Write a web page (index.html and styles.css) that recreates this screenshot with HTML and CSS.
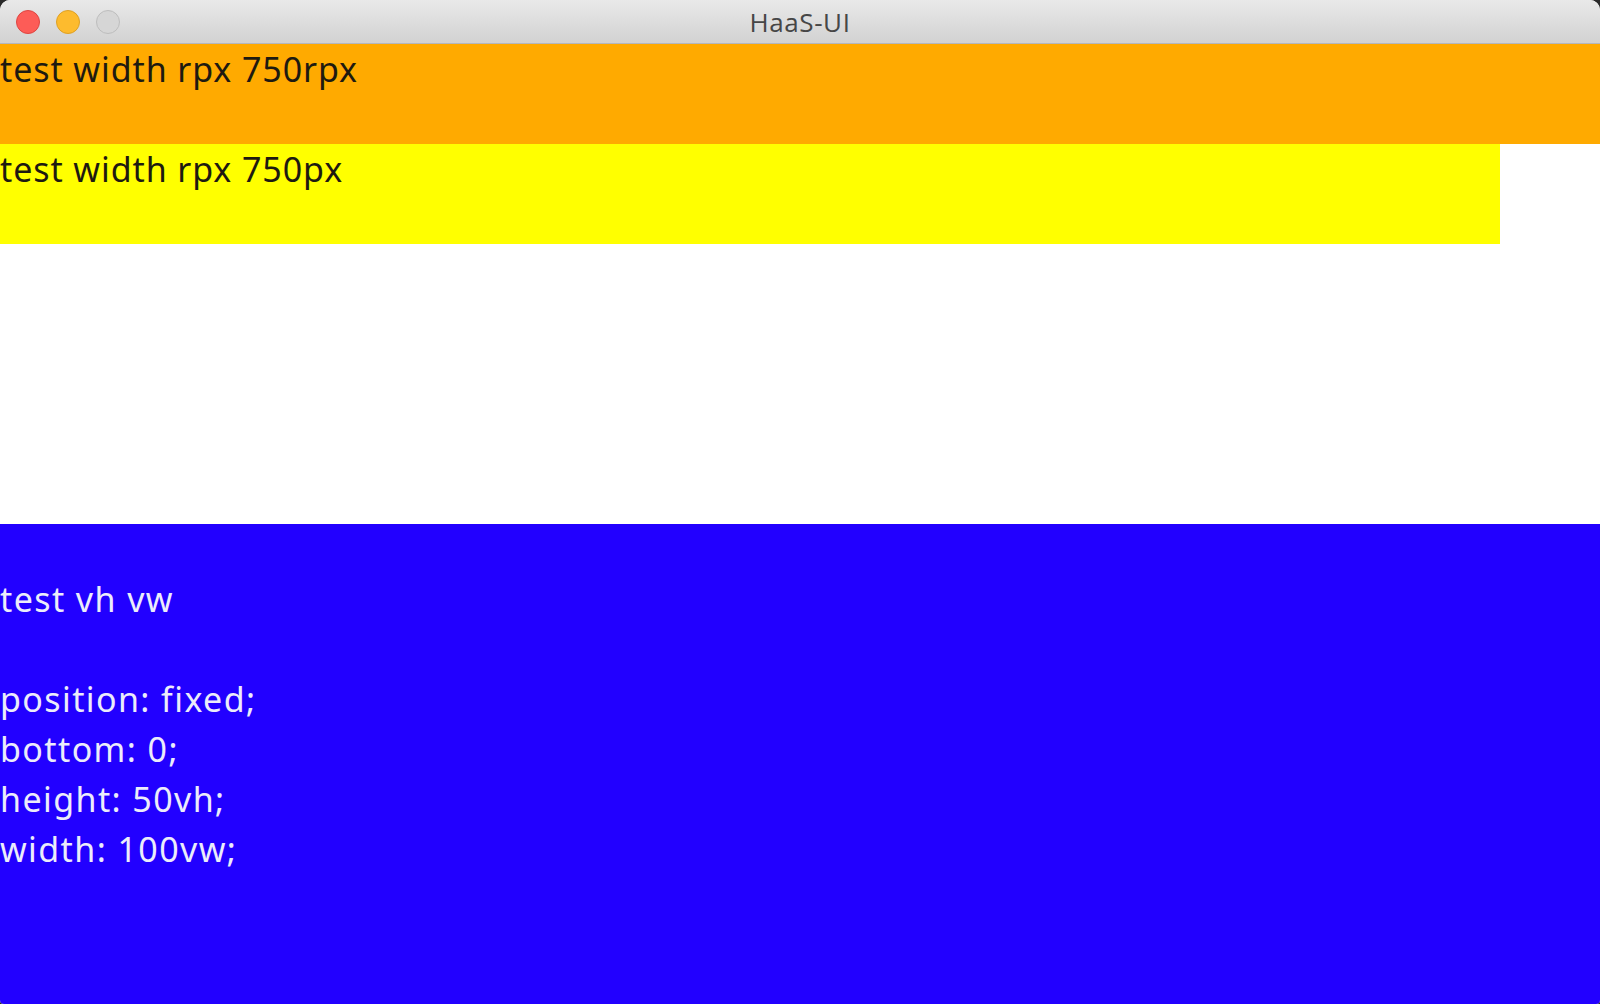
FILE: index.html
```html
<!DOCTYPE html>
<html>
<head>
<meta charset="utf-8">
<title>HaaS-UI</title>
<link rel="stylesheet" href="styles.css">
</head>
<body>
<div class="window">
  <header class="titlebar">
    <div class="lights">
      <span class="light red"></span>
      <span class="light yellow"></span>
      <span class="light gray"></span>
    </div>
    <div class="title">HaaS-UI</div>
  </header>
  <main class="content">
    <div class="box orange">test width rpx 750rpx</div>
    <div class="box yellowbox">test width rpx 750px</div>
    <div class="spacer"></div>
    <div class="fixedbox">
      <div class="line">&nbsp;</div>
      <div class="line">test vh vw</div>
      <div class="line">&nbsp;</div>
      <div class="line">position: fixed;</div>
      <div class="line">bottom: 0;</div>
      <div class="line">height: 50vh;</div>
      <div class="line">width: 100vw;</div>
    </div>
  </main>
</div>
</body>
</html>
```

FILE: styles.css
```css
html, body {
  margin: 0;
  padding: 0;
  background: #2a2a2a;
}
.window {
  width: 1600px;
  height: 1004px;
  display: flex;
  flex-direction: column;
  border-radius: 10px 10px 4px 4px;
  overflow: hidden;
  background: #ffffff;
  font-family: "Noto Sans", "Open Sans", sans-serif;
}
.titlebar {
  height: 43px;
  border-bottom: 1px solid #b4b7bd;
  background: linear-gradient(#e9e9e9, #d2d2d2);
  display: flex;
  align-items: center;
  justify-content: center;
  position: relative;
  flex: none;
}
.lights {
  position: absolute;
  left: 16px;
  top: 10px;
  display: flex;
  gap: 16px;
}
.light {
  width: 22px;
  height: 22px;
  border-radius: 50%;
  border: 1px solid rgba(0,0,0,0.15);
}
.light.red { background: #fd5c57; border-color: #de4541; }
.light.yellow { background: #fdbb2e; border-color: #dea024; }
.light.gray { background: #d6d6d6; border-color: #bdbdbd; }
.title {
  font-family: "Open Sans", "Noto Sans", sans-serif;
  font-size: 26px;
  color: #464646;
  letter-spacing: 0.6px;
}
.content {
  flex: 1;
  display: flex;
  flex-direction: column;
}
.box {
  height: 100px;
  font-size: 34px;
  letter-spacing: 0.9px;
  line-height: 50px;
  color: #1e1a10;
  flex: none;
}
.orange {
  background: #ffaa00;
  width: 1600px;
}
.yellowbox {
  background: #ffff00;
  width: 1500px;
}
.spacer {
  flex: 1;
}
.fixedbox {
  height: 480px;
  flex: none;
  background: #2200ff;
  color: #ececfb;
  font-size: 34px;
  letter-spacing: 1.4px;
  line-height: 50px;
}
```
